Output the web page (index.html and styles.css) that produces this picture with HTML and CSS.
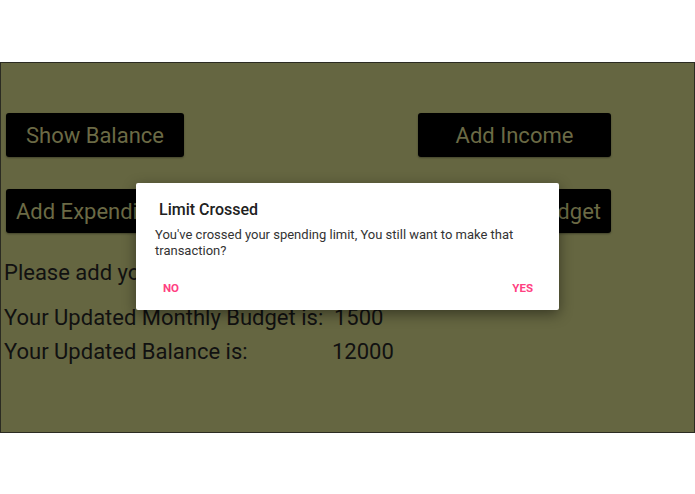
FILE: index.html
```html
<!DOCTYPE html>
<html>
<head>
<meta charset="utf-8">
<link rel="stylesheet" href="styles.css">
</head>
<body>
<div class="screen">
  <div class="row row-top">
    <button class="btn btn-balance">Show Balance</button>
    <button class="btn btn-income">Add Income</button>
  </div>
  <div class="row row-second">
    <button class="btn btn-exp">Add Expenditure</button>
    <button class="btn btn-budget">Set Budget</button>
  </div>
  <div class="prompt">Please add your expenditure</div>
  <div class="stats">
    <span>Your Updated Monthly Budget is:</span><span>1500</span>
    <span>Your Updated Balance is:</span><span class="bal">12000</span>
  </div>

  <div class="dialog">
    <div class="dlg-title">Limit Crossed</div>
    <div class="dlg-msg">You've crossed your spending limit, You still want to make that transaction?</div>
    <div class="dlg-actions">
      <span class="act">NO</span>
      <span class="act">YES</span>
    </div>
  </div>
</div>
</body>
</html>
```

FILE: styles.css
```css
html, body {
  margin: 0;
  padding: 0;
  background: #ffffff;
}
body {
  font-family: Roboto, "Liberation Sans", sans-serif;
}
.screen {
  position: relative;
  margin-top: 62px;
  height: 369px;
  width: 693px;
  background: #656641;
  border: 1px solid #2b2b22;
  overflow: hidden;
}
.row {
  display: flex;
  justify-content: space-between;
  padding: 0 83px 0 5px;
}
.row-top {
  margin-top: 50px;
}
.row-second {
  margin-top: 32px;
}
.btn {
  height: 44px;
  background: #000;
  color: #6b6a45;
  border: none;
  border-radius: 3px;
  font-family: Roboto, "Liberation Sans", sans-serif;
  font-size: 22px;
  padding: 0;
  box-shadow: 0 1px 2px rgba(0,0,0,0.35);
}
.btn-balance { width: 178px; }
.btn-income { width: 193px; }
.btn-exp { width: 180px; padding-left: 10px; text-align: left; }
.btn-budget { width: 130px; padding-right: 10px; text-align: right; }

.prompt {
  margin: 27px 0 0 3px;
  font-size: 22px;
  color: #111;
  line-height: 26px;
}
.stats {
  display: grid;
  grid-template-columns: 330px auto;
  margin: 15px 0 0 3px;
  font-size: 22px;
  color: #111;
  line-height: 34px;
}
.stats .bal { margin-left: -2px; }

.dialog {
  position: absolute;
  left: 135px;
  top: 120px;
  width: 423px;
  height: 127px;
  background: #fff;
  border-radius: 2px;
  box-shadow: 0 4px 14px rgba(0,0,0,0.45);
  box-sizing: border-box;
  padding: 17px 24px 0 19px;
}
.dlg-title {
  font-size: 16px;
  font-weight: 500;
  color: #212121;
  margin-left: 4px;
  line-height: 20px;
}
.dlg-msg {
  margin-top: 7px;
  font-size: 13px;
  line-height: 16px;
  color: #333;
}
.dlg-actions {
  display: flex;
  justify-content: space-between;
  margin-top: 22px;
  padding: 0 2px 0 8px;
}
.act {
  font-size: 11.5px;
  font-weight: 700;
  color: #ff4081;
  line-height: 14px;
}
```
